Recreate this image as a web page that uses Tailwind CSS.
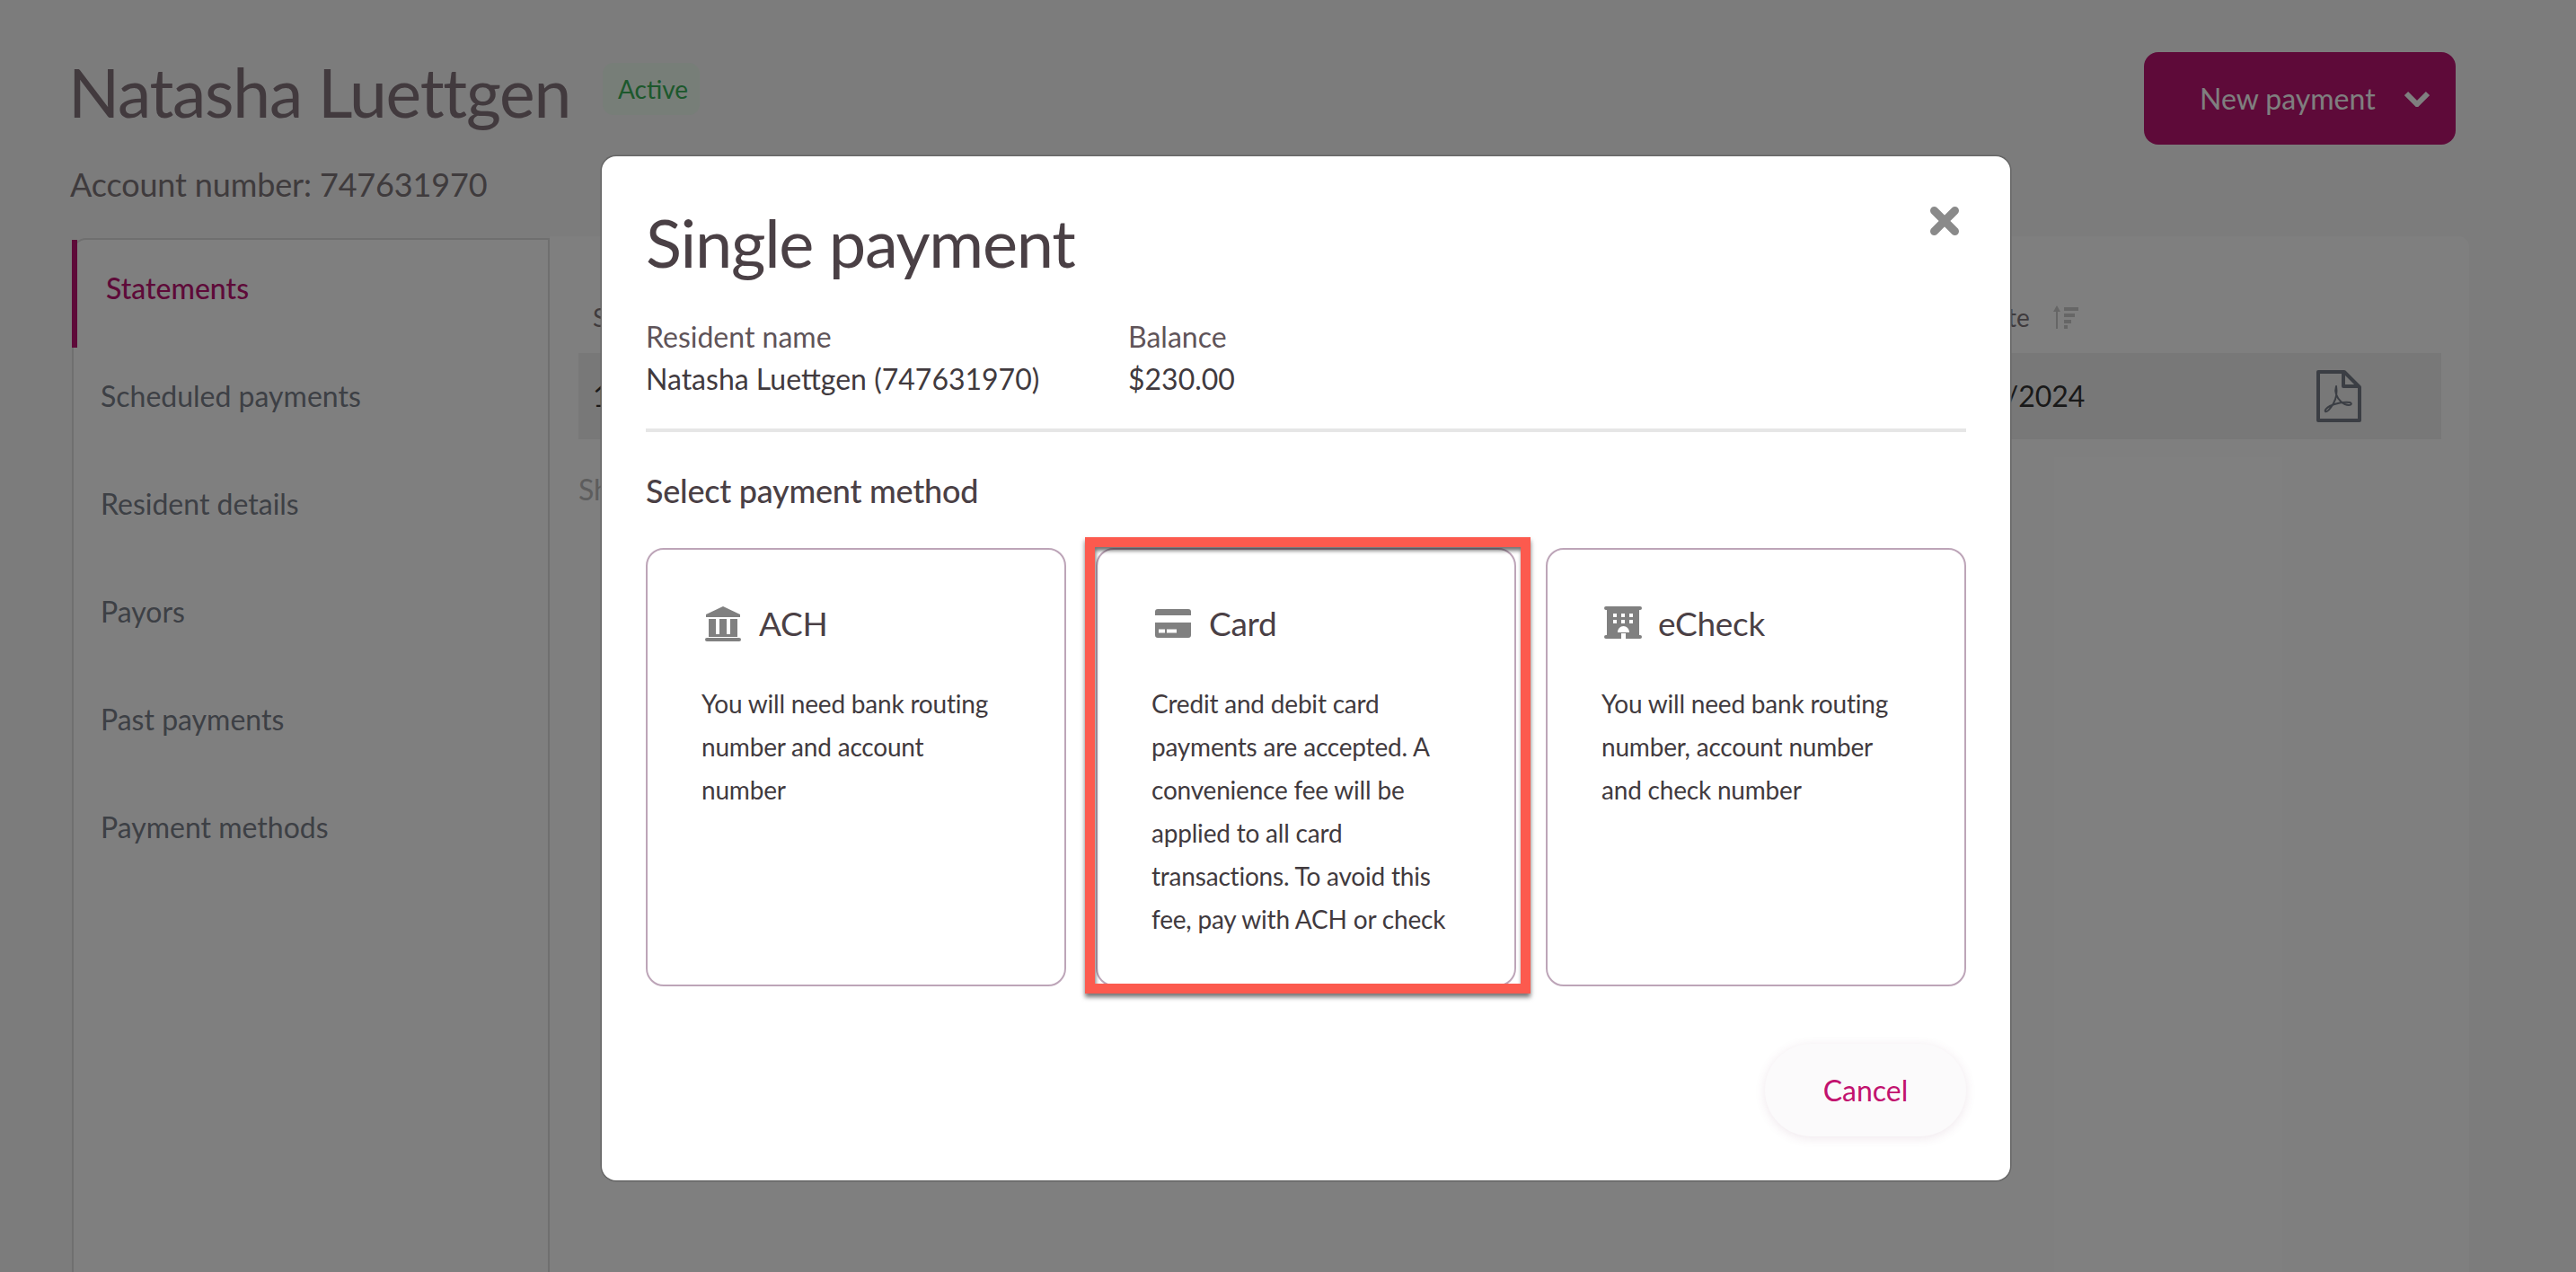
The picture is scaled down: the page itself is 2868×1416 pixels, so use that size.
<!DOCTYPE html>
<html lang="en">
<head>
    <meta charset="UTF-8">
    <title>Single payment</title>
    <script src="https://cdn.jsdelivr.net/npm/@tailwindcss/browser@4"></script>
</head>
<body class="bg-[#f8f8f8] font-['Lato',sans-serif]">

    <div class="relative h-[1416px] w-[2868px] overflow-hidden">

        <!-- page behind the dialog -->
        <header class="flex justify-between pl-[78px] pr-[134px] pt-[56px]">
            <div>
                <div class="flex items-start">
                    <h1 class="-ml-[2px] text-[75px] leading-[92px] tracking-[-1.25px] text-[#84747c]">Natasha Luettgen</h1>
                    <span class="ml-[36px] mt-[14px] flex h-[58px] w-[108px] items-center justify-center rounded-xl bg-[#eefcf0] pl-1 text-[28px] text-[#38b058]">Active</span>
                </div>
                <p class="mt-[33px] text-[36px] leading-[48px] tracking-[-0.15px] text-[#7e767a]">Account number: 747631970</p>
            </div>
            <button class="mt-[2px] flex h-[103px] w-[347px] items-center rounded-2xl bg-[#bc1472] pl-[62px] text-[32px] text-white">
                New payment
                <svg class="ml-[32px]" width="28" height="18" viewBox="0 0 28 18" fill="none" stroke="white" stroke-width="6"><path d="M2 3l12 12L26 3"/></svg>
            </button>
        </header>

        <div class="ml-[80px] mt-[36px] flex h-[1200px] w-[2669px]">
            <nav class="w-[532px] rounded-tl-2xl border-x-2 border-t-2 border-[#dedede] bg-white text-[32px] text-[#7a808a]">
                <a class="-ml-[2px] flex h-[120px] items-center border-l-[6px] border-[#bc1472] pb-[13px] pl-[32px] font-medium text-[#bc1472]">Statements</a>
                <a class="flex h-[120px] items-center pb-[13px] pl-[30px]">Scheduled payments</a>
                <a class="flex h-[120px] items-center pb-[13px] pl-[30px]">Resident details</a>
                <a class="flex h-[120px] items-center pb-[13px] pl-[30px]">Payors</a>
                <a class="flex h-[120px] items-center pb-[13px] pl-[30px]">Past payments</a>
                <a class="flex h-[120px] items-center pb-[13px] pl-[30px]">Payment methods</a>
            </nav>
            <section class="-mt-[2px] flex-1 rounded-tr-xl bg-white pl-[32px] pr-[31px] pt-[60px] text-[32px]">
                <div class="flex h-[60px] items-center pl-4 text-[28px] text-[#7e767a]">
                    <span class="w-[1487px]">Statement</span>
                    <span>Due date</span>
                    <svg class="ml-[26px]" width="28" height="26" viewBox="0 0 28 26" fill="#ccc"><path d="M3 26V7H0l4-7 4 7H5v19z"/><rect x="12" y="2" width="16" height="4"/><rect x="12" y="9" width="12" height="4"/><rect x="12" y="16" width="8" height="4"/><rect x="12" y="22" width="4" height="4"/></svg>
                </div>
                <div class="mt-[10px] flex h-[96px] items-center bg-[#f0f0f0] pl-4 text-[#333]">
                    <span class="w-[1484px]">1</span>
                    <span class="w-[435px]">12/01/2024</span>
                    <svg width="50" height="58" viewBox="0 0 50 58" fill="none" stroke="#767c88" stroke-width="4" stroke-linejoin="round">
                        <path d="M2 2h29l17 17v37H2z"/>
                        <path d="M30 2v16h18"/>
                        <path stroke-width="2" d="M22 18c1 6 1 12-3 19-3 5-7 10-9 9-1-1 1-4 5-6 6-3 16-5 22-4 3 1 2 3-1 3-6 0-12-6-14-12-1-3-1-6 0-9z"/>
                    </svg>
                </div>
                <p class="mt-[32px] leading-[48px] text-[#bbb]">Showing 1 of 1</p>
            </section>
        </div>

        <!-- backdrop -->
        <div class="absolute inset-0 bg-black/50"></div>

        <!-- dialog -->
        <div class="absolute left-[670px] top-[174px] flex h-[1140px] w-[1568px] flex-col rounded-2xl bg-white px-[49px] pt-[52px] shadow-[0_0_0_1.5px_#666]">
            <h2 class="text-[74px] leading-[88px] tracking-[-1.3px] text-[#4a4045]">Single payment</h2>
            <svg class="absolute right-[57px] top-[56px]" width="32" height="32" viewBox="0 0 32 32" fill="none" stroke="#8a8a8a" stroke-width="9" stroke-linecap="round"><path d="M4.5 4.5l23 23M27.5 4.5l-23 23"/></svg>

            <div class="mt-[37px] flex text-[32px] leading-[47px]">
                <div class="w-[537px]">
                    <p class="text-[#5f5459]">Resident name</p>
                    <p class="text-[#413a3e]">Natasha Luettgen (747631970)</p>
                </div>
                <div>
                    <p class="text-[#5f5459]">Balance</p>
                    <p class="text-[#413a3e]">$230.00</p>
                </div>
            </div>
            <div class="mt-[32px] h-[4px] bg-[#e6e6e6]"></div>

            <h3 class="mt-[41px] text-[36px] font-medium leading-[48px] tracking-[-0.25px] text-[#4a4045]">Select payment method</h3>

            <div class="mt-[40px] grid h-[488px] grid-cols-3 gap-[33px]">
                <div class="rounded-[20px] border-2 border-[#bda5b8] px-[60px] pt-[58px]">
                    <div class="flex h-[48px] items-center gap-4 text-[37px] tracking-[-0.3px] text-[#4a4045]">
                        <svg width="48" height="48" viewBox="0 0 48 48" fill="#808080"><path d="M24 5L5 14v3h38v-3z"/><rect x="8" y="19" width="8" height="17"/><rect x="20" y="19" width="8" height="17"/><rect x="32" y="19" width="8" height="17"/><rect x="8" y="36" width="32" height="3"/><rect x="4" y="40" width="40" height="4" rx="2"/></svg>
                        ACH
                    </div>
                    <p class="mt-[41px] text-[28px] leading-[48px] tracking-[-0.2px] text-[#413a3e]">You will need bank routing number and account number</p>
                </div>
                <div class="rounded-[20px] border-2 border-[#bda5b8] px-[60px] pt-[58px]">
                    <div class="flex h-[48px] items-center gap-4 text-[37px] tracking-[-0.3px] text-[#4a4045]">
                        <svg width="48" height="48" viewBox="0 0 48 48" fill="#808080"><path d="M7 8h34a3 3 0 0 1 3 3v4H4v-4a3 3 0 0 1 3-3z"/><path fill-rule="evenodd" d="M4 23h40v14a3 3 0 0 1-3 3H7a3 3 0 0 1-3-3zm4 7.500v4h7v-4zm9 0v4h11v-4z"/></svg>
                        Card
                    </div>
                    <p class="mt-[41px] text-[28px] leading-[48px] tracking-[-0.2px] text-[#413a3e]">Credit and debit card payments are accepted. A convenience fee will be applied to all card transactions. To avoid this fee, pay with ACH or check</p>
                </div>
                <div class="rounded-[20px] border-2 border-[#bda5b8] px-[60px] pt-[58px]">
                    <div class="flex h-[48px] items-center gap-[15px] text-[37px] tracking-[-0.3px] text-[#4a4045]">
                        <svg width="48" height="48" viewBox="0 0 48 48" fill="#808080"><path fill-rule="evenodd" d="M5 5h38a1 1 0 0 1 0 4h-1v28h1a1.500 1.500 0 0 1 0 4H27v-6h-5v6H5a1.500 1.500 0 0 1 0-4h1V9H5a1 1 0 0 1 0-4zm8 8v4h4v-4zm9 0v4h4v-4zm9 0v4h4v-4zm-18 7v4h4v-4zm9 0v4h4v-4zm9 0v4h4v-4zM18 34h13c0-4-3-7-6.500-7S18 30 18 34z"/></svg>
                        eCheck
                    </div>
                    <p class="mt-[41px] text-[28px] leading-[48px] tracking-[-0.2px] text-[#413a3e]">You will need bank routing number, account number and check number</p>
                </div>
            </div>

            <button class="mt-[64px] h-[103px] w-[224px] self-end rounded-full bg-[#fbfafb] text-[32px] text-[#c2126f] shadow-[0_2px_12px_rgba(120,60,100,0.12)]">Cancel</button>

            <!-- annotation box around the Card option -->
            <div class="absolute left-[538px] top-[424px] h-[508px] w-[496px] border-[11px] border-[#fc5a4e] shadow-[0_4px_5px_rgba(0,0,0,0.55),inset_1px_4px_4px_rgba(0,0,0,0.55)]"></div>
        </div>
    </div>

</body>
</html>
